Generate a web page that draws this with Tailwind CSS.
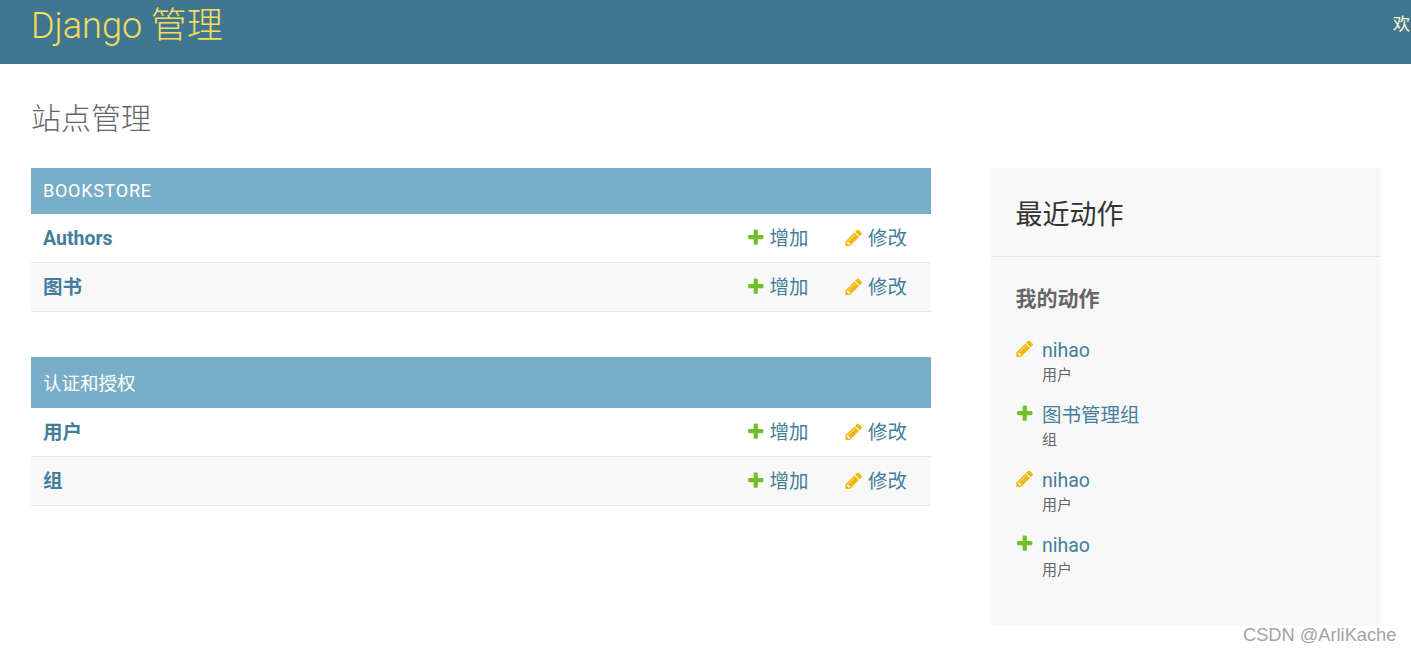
<!DOCTYPE html>
<html lang="zh-CN">
<head>
    <meta charset="UTF-8">
    <title>站点管理</title>
    <script src="https://cdn.jsdelivr.net/npm/@tailwindcss/browser@4"></script>
</head>
<body class="relative h-[652px] overflow-hidden bg-white font-['Roboto','Noto_Sans_CJK_SC',sans-serif] text-[#333]">
    <!-- header -->
    <header class="flex h-16 justify-between overflow-hidden bg-[#417690] pl-[31px]">
        <h1 class="-mt-1 text-[36px] leading-[60px] font-light whitespace-nowrap text-[#f5dd5d]">Django 管理</h1>
        <div class="mt-3 pr-px text-[17px] leading-6 whitespace-nowrap text-[#ffc]">欢</div>
    </header>

    <main class="pr-[30px] pl-[31px]">
        <h2 class="mt-[37px] text-[30px] leading-9 font-light text-[#666]">站点管理</h2>

        <div class="mt-[31px] flex items-start gap-[60px]">
            <div class="w-[900px]">
                <!-- bookstore -->
                <div class="flex h-[46px] items-center bg-[#79aec8] px-3 pb-0.5 text-[18px] tracking-[0.72px] text-white">BOOKSTORE</div>
                <div class="flex h-[49px] items-center justify-between border-b border-[#e8e8e8] bg-white pt-px pr-6 pl-3">
                    <a class="text-[19.5px] font-bold text-[#447e9b]">Authors</a>
                    <div class="flex items-center gap-[35.5px] text-[19.5px] text-[#447e9b]">
                        <span class="flex items-center gap-[3.5px]">
                            <svg class="-mt-0.5 size-[19.5px]" viewBox="0 0 1792 1792"><path fill="#70bf2b" d="M1600 736v192q0 40-28 68t-68 28h-416v416q0 40-28 68t-68 28h-192q-40 0-68-28t-28-68v-416h-416q-40 0-68-28t-28-68v-192q0-40 28-68t68-28h416v-416q0-40 28-68t68-28h192q40 0 68 28t28 68v416h416q40 0 68 28t28 68z"/></svg>增加
                        </span>
                        <span class="flex items-center gap-[4.5px]">
                            <svg class="-mt-0.5 size-[19.5px]" viewBox="0 0 1792 1792"><path fill="#efb80b" d="M491 1536l91-91-235-235-91 91v107h128v128h107zm523-928q0-22-22-22-10 0-17 7l-542 542q-7 7-7 17 0 22 22 22 10 0 17-7l542-542q7-7 7-17zm-54-192l416 416-832 832h-416v-416zm683 96q0 53-37 90l-166 166-416-416 166-165q36-38 90-38 53 0 91 38l235 234q37 39 37 91z"/></svg>修改
                        </span>
                    </div>
                </div>
                <div class="flex h-[49px] items-center justify-between border-b border-[#e8e8e8] bg-[#f8f8f8] pt-px pr-6 pl-3">
                    <a class="text-[19.5px] font-bold text-[#447e9b]">图书</a>
                    <div class="flex items-center gap-[35.5px] text-[19.5px] text-[#447e9b]">
                        <span class="flex items-center gap-[3.5px]">
                            <svg class="-mt-0.5 size-[19.5px]" viewBox="0 0 1792 1792"><path fill="#70bf2b" d="M1600 736v192q0 40-28 68t-68 28h-416v416q0 40-28 68t-68 28h-192q-40 0-68-28t-28-68v-416h-416q-40 0-68-28t-28-68v-192q0-40 28-68t68-28h416v-416q0-40 28-68t68-28h192q40 0 68 28t28 68v416h416q40 0 68 28t28 68z"/></svg>增加
                        </span>
                        <span class="flex items-center gap-[4.5px]">
                            <svg class="-mt-0.5 size-[19.5px]" viewBox="0 0 1792 1792"><path fill="#efb80b" d="M491 1536l91-91-235-235-91 91v107h128v128h107zm523-928q0-22-22-22-10 0-17 7l-542 542q-7 7-7 17 0 22 22 22 10 0 17-7l542-542q7-7 7-17zm-54-192l416 416-832 832h-416v-416zm683 96q0 53-37 90l-166 166-416-416 166-165q36-38 90-38 53 0 91 38l235 234q37 39 37 91z"/></svg>修改
                        </span>
                    </div>
                </div>

                <!-- auth -->
                <div class="mt-[45px] flex h-[51px] items-center bg-[#79aec8] px-3 pt-1 text-[18.5px] text-white">认证和授权</div>
                <div class="flex h-[49px] items-center justify-between border-b border-[#e8e8e8] bg-white pt-px pr-6 pl-3">
                    <a class="text-[19.5px] font-bold text-[#447e9b]">用户</a>
                    <div class="flex items-center gap-[35.5px] text-[19.5px] text-[#447e9b]">
                        <span class="flex items-center gap-[3.5px]">
                            <svg class="-mt-0.5 size-[19.5px]" viewBox="0 0 1792 1792"><path fill="#70bf2b" d="M1600 736v192q0 40-28 68t-68 28h-416v416q0 40-28 68t-68 28h-192q-40 0-68-28t-28-68v-416h-416q-40 0-68-28t-28-68v-192q0-40 28-68t68-28h416v-416q0-40 28-68t68-28h192q40 0 68 28t28 68v416h416q40 0 68 28t28 68z"/></svg>增加
                        </span>
                        <span class="flex items-center gap-[4.5px]">
                            <svg class="-mt-0.5 size-[19.5px]" viewBox="0 0 1792 1792"><path fill="#efb80b" d="M491 1536l91-91-235-235-91 91v107h128v128h107zm523-928q0-22-22-22-10 0-17 7l-542 542q-7 7-7 17 0 22 22 22 10 0 17-7l542-542q7-7 7-17zm-54-192l416 416-832 832h-416v-416zm683 96q0 53-37 90l-166 166-416-416 166-165q36-38 90-38 53 0 91 38l235 234q37 39 37 91z"/></svg>修改
                        </span>
                    </div>
                </div>
                <div class="flex h-[49px] items-center justify-between border-b border-[#e8e8e8] bg-[#f8f8f8] pt-px pr-6 pl-3">
                    <a class="text-[19.5px] font-bold text-[#447e9b]">组</a>
                    <div class="flex items-center gap-[35.5px] text-[19.5px] text-[#447e9b]">
                        <span class="flex items-center gap-[3.5px]">
                            <svg class="-mt-0.5 size-[19.5px]" viewBox="0 0 1792 1792"><path fill="#70bf2b" d="M1600 736v192q0 40-28 68t-68 28h-416v416q0 40-28 68t-68 28h-192q-40 0-68-28t-28-68v-416h-416q-40 0-68-28t-28-68v-192q0-40 28-68t68-28h416v-416q0-40 28-68t68-28h192q40 0 68 28t28 68v416h416q40 0 68 28t28 68z"/></svg>增加
                        </span>
                        <span class="flex items-center gap-[4.5px]">
                            <svg class="-mt-0.5 size-[19.5px]" viewBox="0 0 1792 1792"><path fill="#efb80b" d="M491 1536l91-91-235-235-91 91v107h128v128h107zm523-928q0-22-22-22-10 0-17 7l-542 542q-7 7-7 17 0 22 22 22 10 0 17-7l542-542q7-7 7-17zm-54-192l416 416-832 832h-416v-416zm683 96q0 53-37 90l-166 166-416-416 166-165q36-38 90-38 53 0 91 38l235 234q37 39 37 91z"/></svg>修改
                        </span>
                    </div>
                </div>
            </div>

            <!-- recent actions -->
            <aside class="h-[458px] w-[390px] bg-[#f8f8f8]">
                <h3 class="flex h-[89px] items-center border-b border-[#e8e8e8] pt-1.5 pl-[24.5px] text-[27px] text-[#333]">最近动作</h3>
                <h4 class="mt-[30px] pl-[24.5px] text-[21px] leading-6 font-bold text-[#666]">我的动作</h4>
                <ul class="mt-[26px] flex flex-col gap-[11px] pl-[24px]">
                    <li class="h-[54px]">
                        <div class="flex items-center gap-[7.5px] text-[19.5px] leading-[27px] text-[#447e9b]">
                            <svg class="-mt-1 size-[19.5px]" viewBox="0 0 1792 1792"><path fill="#efb80b" d="M491 1536l91-91-235-235-91 91v107h128v128h107zm523-928q0-22-22-22-10 0-17 7l-542 542q-7 7-7 17 0 22 22 22 10 0 17-7l542-542q7-7 7-17zm-54-192l416 416-832 832h-416v-416zm683 96q0 53-37 90l-166 166-416-416 166-165q36-38 90-38 53 0 91 38l235 234q37 39 37 91z"/></svg>nihao
                        </div>
                        <div class="pl-[27px] text-[15px] leading-[22px] text-[#666]">用户</div>
                    </li>
                    <li class="h-[54px]">
                        <div class="flex items-center gap-[7.5px] text-[19.5px] leading-[27px] text-[#447e9b]">
                            <svg class="-mt-1 size-[19.5px]" viewBox="0 0 1792 1792"><path fill="#70bf2b" d="M1600 736v192q0 40-28 68t-68 28h-416v416q0 40-28 68t-68 28h-192q-40 0-68-28t-28-68v-416h-416q-40 0-68-28t-28-68v-192q0-40 28-68t68-28h416v-416q0-40 28-68t68-28h192q40 0 68 28t28 68v416h416q40 0 68 28t28 68z"/></svg>图书管理组
                        </div>
                        <div class="pl-[27px] text-[15px] leading-[22px] text-[#666]">组</div>
                    </li>
                    <li class="h-[54px]">
                        <div class="flex items-center gap-[7.5px] text-[19.5px] leading-[27px] text-[#447e9b]">
                            <svg class="-mt-1 size-[19.5px]" viewBox="0 0 1792 1792"><path fill="#efb80b" d="M491 1536l91-91-235-235-91 91v107h128v128h107zm523-928q0-22-22-22-10 0-17 7l-542 542q-7 7-7 17 0 22 22 22 10 0 17-7l542-542q7-7 7-17zm-54-192l416 416-832 832h-416v-416zm683 96q0 53-37 90l-166 166-416-416 166-165q36-38 90-38 53 0 91 38l235 234q37 39 37 91z"/></svg>nihao
                        </div>
                        <div class="pl-[27px] text-[15px] leading-[22px] text-[#666]">用户</div>
                    </li>
                    <li class="h-[54px]">
                        <div class="flex items-center gap-[7.5px] text-[19.5px] leading-[27px] text-[#447e9b]">
                            <svg class="-mt-1 size-[19.5px]" viewBox="0 0 1792 1792"><path fill="#70bf2b" d="M1600 736v192q0 40-28 68t-68 28h-416v416q0 40-28 68t-68 28h-192q-40 0-68-28t-28-68v-416h-416q-40 0-68-28t-28-68v-192q0-40 28-68t68-28h416v-416q0-40 28-68t68-28h192q40 0 68 28t28 68v416h416q40 0 68 28t28 68z"/></svg>nihao
                        </div>
                        <div class="pl-[27px] text-[15px] leading-[22px] text-[#666]">用户</div>
                    </li>
                </ul>
            </aside>
        </div>
    </main>

    <!-- watermark -->
    <div class="absolute top-[624px] left-[1243px] font-['Liberation_Sans',sans-serif] text-[18.25px] leading-[22px] whitespace-nowrap text-[#a3a3a3]">CSDN @ArliKache</div>
</body>
</html>
